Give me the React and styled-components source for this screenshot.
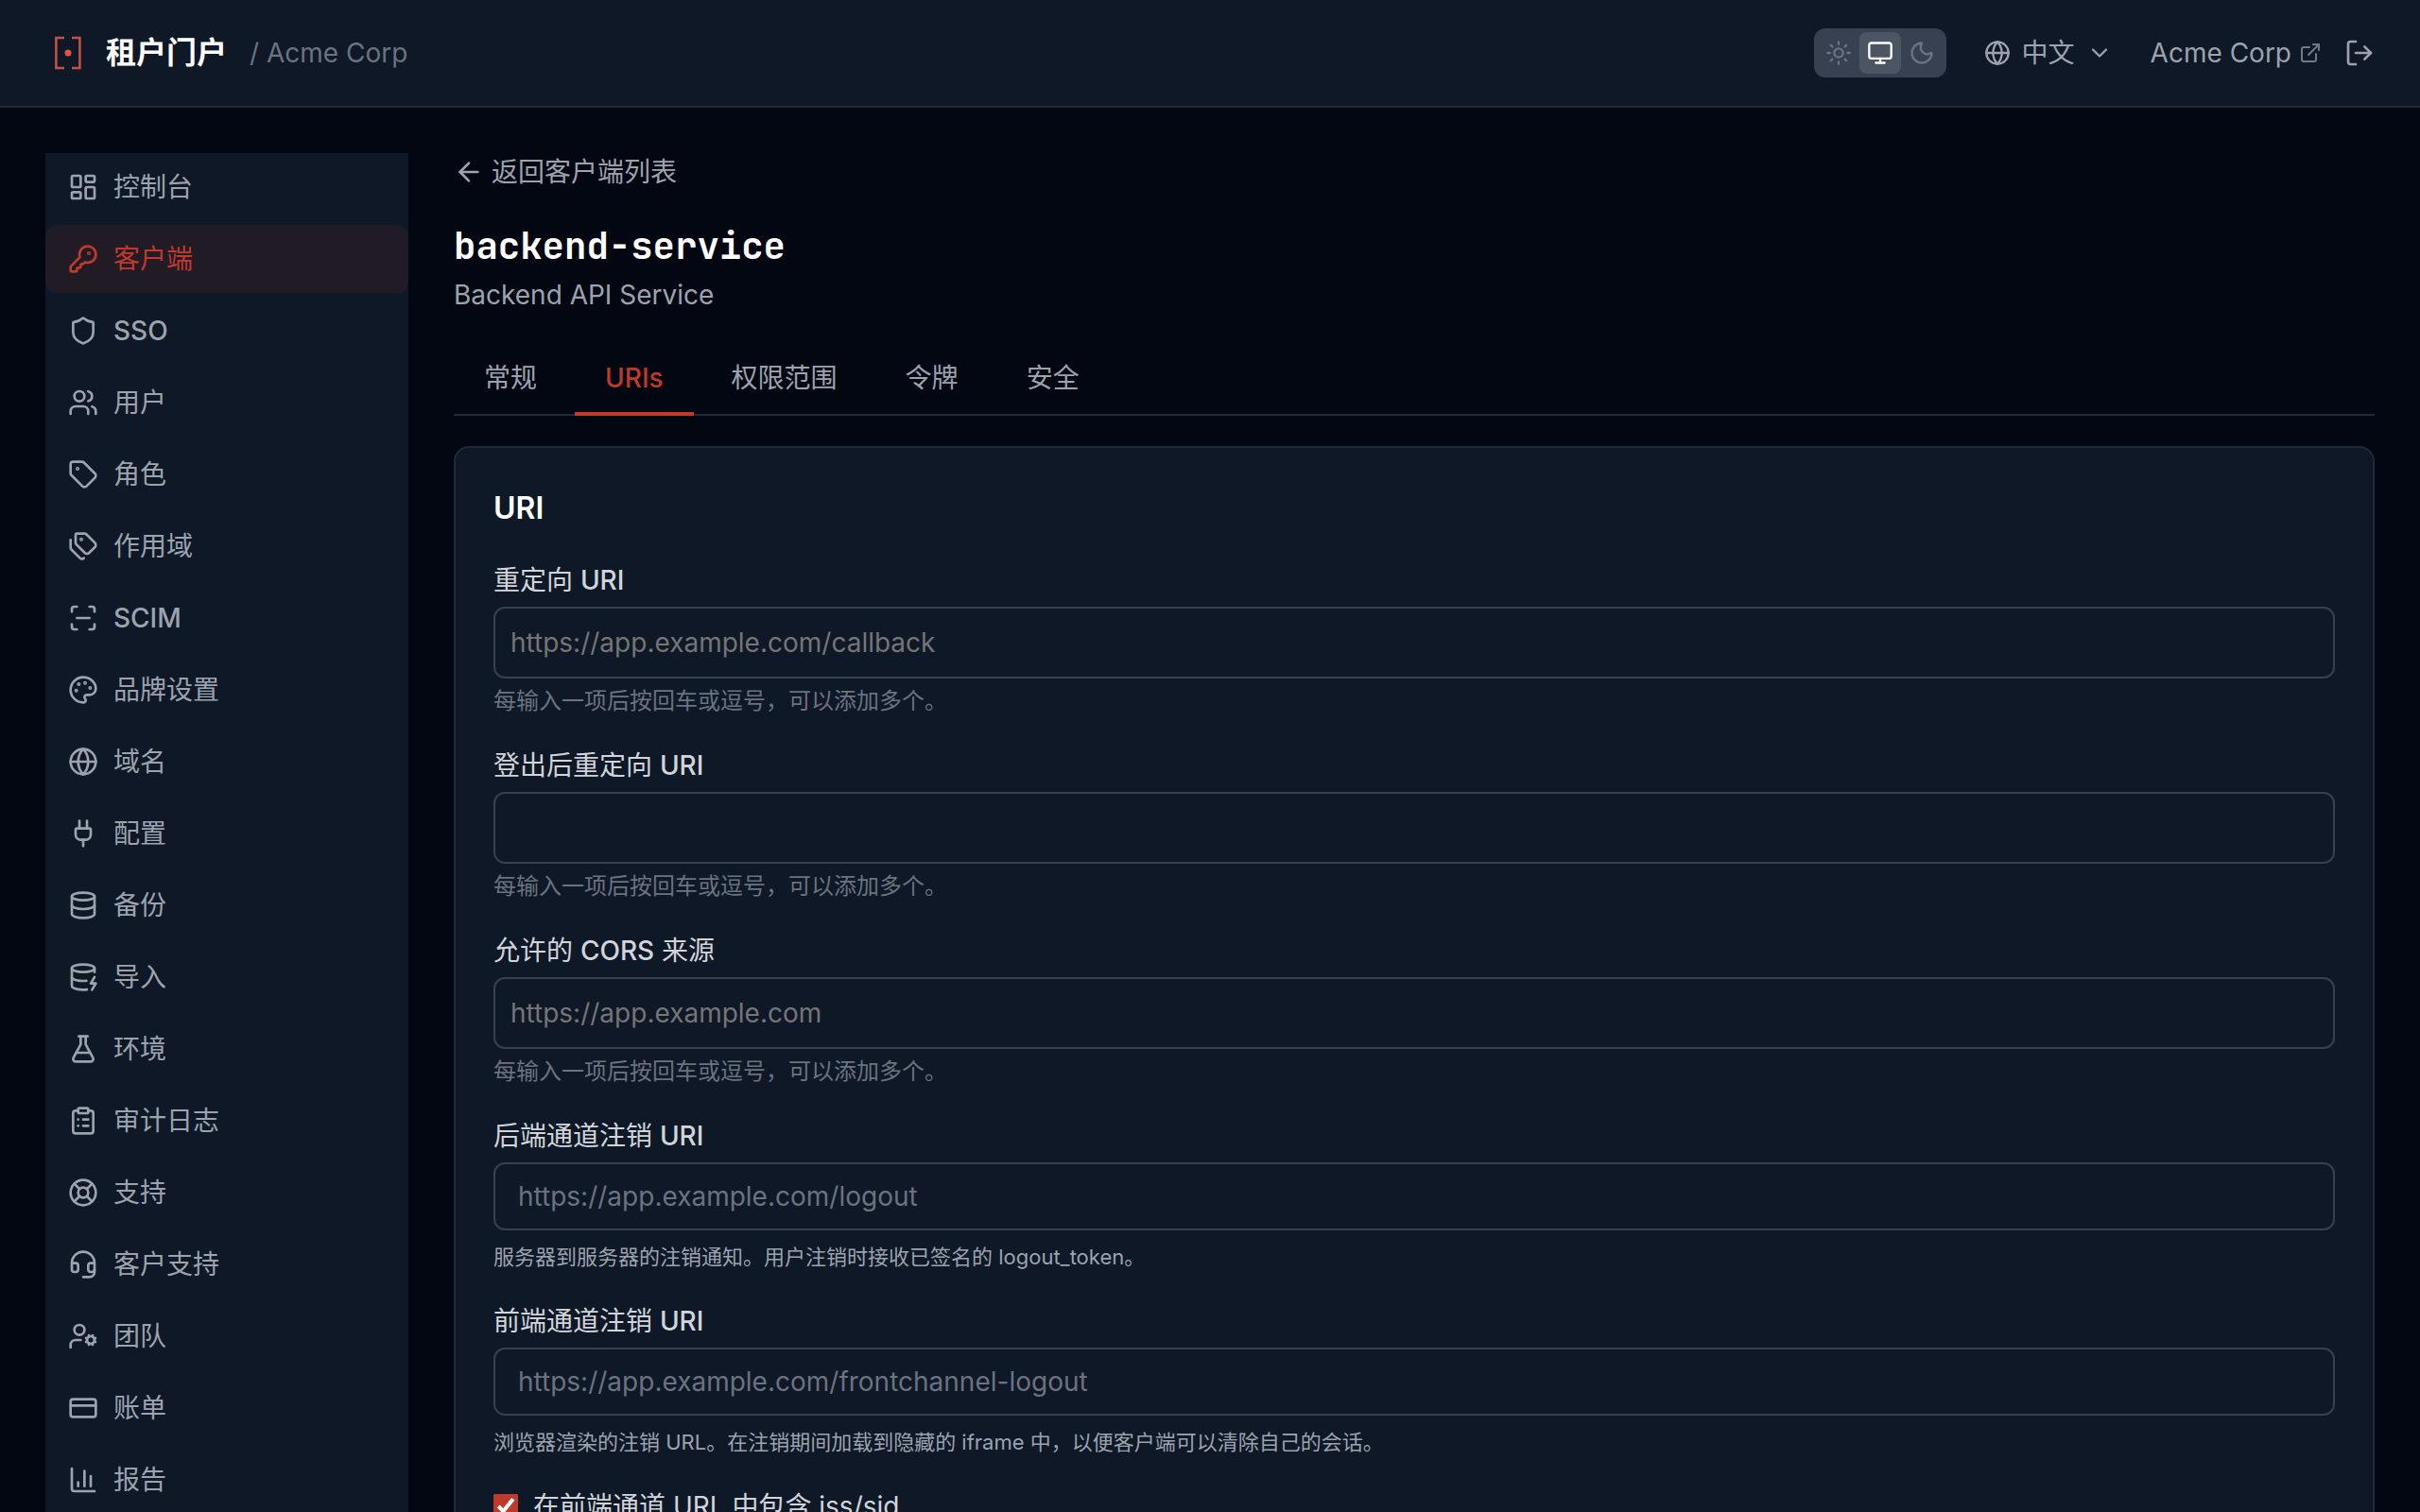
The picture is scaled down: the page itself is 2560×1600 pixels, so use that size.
import React, { useState } from 'react'
import styled, { createGlobalStyle } from 'styled-components'
import {
  LayoutDashboard, KeyRound, Shield, Users, Tag, Tags, ScanLine, Palette, Globe, Plug,
  Database, DatabaseZap, FlaskConical, ClipboardList, LifeBuoy, Headset, UserCog,
  CreditCard, ChartColumn, Sun, Monitor, Moon, ChevronDown, ExternalLink, LogOut, ArrowLeft,
} from 'lucide-react'

const navItems = [
  { label: '控制台', icon: LayoutDashboard },
  { label: '客户端', icon: KeyRound },
  { label: 'SSO', icon: Shield },
  { label: '用户', icon: Users },
  { label: '角色', icon: Tag },
  { label: '作用域', icon: Tags },
  { label: 'SCIM', icon: ScanLine },
  { label: '品牌设置', icon: Palette },
  { label: '域名', icon: Globe },
  { label: '配置', icon: Plug },
  { label: '备份', icon: Database },
  { label: '导入', icon: DatabaseZap },
  { label: '环境', icon: FlaskConical },
  { label: '审计日志', icon: ClipboardList },
  { label: '支持', icon: LifeBuoy },
  { label: '客户支持', icon: Headset },
  { label: '团队', icon: UserCog },
  { label: '账单', icon: CreditCard },
  { label: '报告', icon: ChartColumn },
]

const tabs = ['常规', 'URIs', '权限范围', '令牌', '安全']

const themes = [
  { id: 'light', label: 'Light', icon: Sun },
  { id: 'system', label: 'System', icon: Monitor },
  { id: 'dark', label: 'Dark', icon: Moon },
]

const listHint = '每输入一项后按回车或逗号，可以添加多个。'

const listFields = [
  { id: 'redirect', label: '重定向 URI', placeholder: 'https://app.example.com/callback' },
  { id: 'post-logout', label: '登出后重定向 URI', placeholder: '' },
  { id: 'cors', label: '允许的 CORS 来源', placeholder: 'https://app.example.com' },
]

const urlFields = [
  {
    id: 'backchannel',
    label: '后端通道注销 URI',
    placeholder: 'https://app.example.com/logout',
    hint: '服务器到服务器的注销通知。用户注销时接收已签名的 logout_token。',
  },
  {
    id: 'frontchannel',
    label: '前端通道注销 URI',
    placeholder: 'https://app.example.com/frontchannel-logout',
    hint: '浏览器渲染的注销 URL。在注销期间加载到隐藏的 iframe 中，以便客户端可以清除自己的会话。',
  },
]

const Logo = () => (
  <svg width="48" height="48" viewBox="0 0 48 48" fill="none" aria-hidden="true">
    <path d="M20 8H11.4V40H20M28 8H36.4V40H28" stroke="#c44f45" strokeWidth="2.6" />
    <circle cx="24" cy="24" r="3.5" fill="#e0563c" />
  </svg>
)

// Latin words are set in medium, Chinese stays regular
const MixedText = ({ text }) =>
  text.split(/([A-Za-z]+)/).map((part, i) => (i % 2 ? <Latin key={i}>{part}</Latin> : part))

const App = () => {
  const [theme, setTheme] = useState('system')
  const [tab, setTab] = useState('URIs')
  const [includeSid, setIncludeSid] = useState(true)

  return (
    <>
      <GlobalStyle />
      <Header>
        <Brand href="#">
          <Logo />
          <BrandName>租户门户</BrandName>
          <Tenant>/ Acme Corp</Tenant>
        </Brand>
        <HeaderActions>
          <ThemeSwitch>
            {themes.map(({ id, label, icon: Icon }) => (
              <ThemeButton key={id} aria-label={label} $active={theme === id} onClick={() => setTheme(id)}>
                <Icon size={28} />
              </ThemeButton>
            ))}
          </ThemeSwitch>
          <LanguageButton>
            <Globe size={28} />
            中文
            <ChevronDown size={28} />
          </LanguageButton>
          <Account>
            <AccountLink href="#">
              Acme Corp
              <ExternalLink size={24} />
            </AccountLink>
            <IconButton aria-label="Log out">
              <LogOut size={32} />
            </IconButton>
          </Account>
        </HeaderActions>
      </Header>

      <Layout>
        <Sidebar>
          {navItems.map(({ label, icon: Icon }) => (
            <NavItem key={label} href="#" $active={label === '客户端'}>
              <Icon size={32} />
              <span><MixedText text={label} /></span>
            </NavItem>
          ))}
        </Sidebar>

        <Main>
          <BackLink href="#">
            <ArrowLeft size={32} />
            返回客户端列表
          </BackLink>
          <Title>backend-service</Title>
          <Subtitle>Backend API Service</Subtitle>

          <TabList role="tablist">
            {tabs.map((name) => (
              <Tab key={name} role="tab" aria-selected={tab === name} $active={tab === name} onClick={() => setTab(name)}>
                <MixedText text={name} />
              </Tab>
            ))}
          </TabList>

          <Card>
            <CardTitle>URI</CardTitle>
            {listFields.map((field) => (
              <Field key={field.id}>
                <Label htmlFor={field.id}><MixedText text={field.label} /></Label>
                <ListInput id={field.id} type="text" placeholder={field.placeholder} />
                <ListHint>{listHint}</ListHint>
              </Field>
            ))}
            {urlFields.map((field) => (
              <Field key={field.id}>
                <Label htmlFor={field.id}><MixedText text={field.label} /></Label>
                <UrlInput id={field.id} type="url" placeholder={field.placeholder} />
                <UrlHint>{field.hint}</UrlHint>
              </Field>
            ))}
            <CheckLabel>
              <Checkbox type="checkbox" checked={includeSid} onChange={(e) => setIncludeSid(e.target.checked)} />
              在前端通道 URL 中包含 iss/sid
            </CheckLabel>
          </Card>
        </Main>
      </Layout>
    </>
  )
}

const GlobalStyle = createGlobalStyle`
  *, *::before, *::after {
    box-sizing: border-box;
  }
  html {
    scrollbar-width: none;
  }
  body {
    margin: 0;
    background: #030712;
    color: #9ca3af;
    font-family: Inter, 'Noto Sans CJK SC', sans-serif;
    font-size: 28px;
    line-height: 40px;
  }
  a {
    color: inherit;
    text-decoration: none;
  }
  button, input {
    font: inherit;
    color: inherit;
  }
  button {
    padding: 0;
    border: none;
    background: none;
    cursor: pointer;
  }
  h1, h2, p {
    margin: 0;
  }
  svg {
    flex-shrink: 0;
  }
`

const Latin = styled.span`
  font-weight: 500;
`

const Header = styled.header`
  display: flex;
  align-items: center;
  justify-content: space-between;
  height: 114px;
  padding: 0 48px;
  background: #0f1826;
  border-bottom: 2px solid #1f2937;
`

const Brand = styled.a`
  display: flex;
  align-items: center;
`

const BrandName = styled.span`
  margin: 0 24px 0 16px;
  color: #fff;
  font-size: 32px;
  font-weight: 700;
`

const Tenant = styled.span`
  color: #6b7280;
`

const HeaderActions = styled.div`
  display: flex;
  align-items: center;
  gap: 40px;
`

const ThemeSwitch = styled.div`
  display: flex;
  padding: 4px;
  border-radius: 12px;
  background: #374151;
`

const ThemeButton = styled.button`
  display: flex;
  align-items: center;
  justify-content: center;
  width: 44px;
  height: 44px;
  border-radius: 8px;
  color: ${({ $active }) => ($active ? '#fff' : '#6b7280')};
  background: ${({ $active }) => ($active ? '#4b5563' : 'transparent')};
`

const LanguageButton = styled.button`
  display: flex;
  align-items: center;
  gap: 12px;
`

const Account = styled.div`
  display: flex;
  align-items: center;
  gap: 24px;
`

const AccountLink = styled.a`
  display: flex;
  align-items: center;
  gap: 8px;
  svg {
    opacity: 0.7;
  }
`

const IconButton = styled.button`
  display: flex;
`

const Layout = styled.div`
  display: flex;
  gap: 48px;
  padding: 48px;
`

const Sidebar = styled.nav`
  display: flex;
  flex-direction: column;
  gap: 4px;
  flex: 0 0 384px;
  background: #0f1826;
`

const NavItem = styled.a`
  display: flex;
  align-items: center;
  gap: 16px;
  padding: 16px 24px;
  border-radius: 12px;
  color: ${({ $active }) => ($active ? '#c0392b' : 'inherit')};
  background: ${({ $active }) => ($active ? 'rgba(192, 57, 43, 0.1)' : 'transparent')};
`

const Main = styled.main`
  flex: 1;
  min-width: 0;
`

const BackLink = styled.a`
  display: flex;
  align-items: center;
  gap: 8px;
  width: fit-content;
`

const Title = styled.h1`
  margin-top: 30px;
  color: #fff;
  font-family: 'JetBrains Mono', 'DejaVu Sans Mono', monospace;
  font-size: 39px;
  font-weight: 700;
  line-height: 56px;
`

const Subtitle = styled.p`
  margin-top: 4px;
`

const TabList = styled.div`
  display: flex;
  gap: 8px;
  margin: 32px 0;
  box-shadow: inset 0 -2px #1f2937;
`

const Tab = styled.button`
  padding: 16px 32px;
  border-bottom: 4px solid ${({ $active }) => ($active ? '#c0392b' : 'transparent')};
  color: ${({ $active }) => ($active ? '#c0392b' : 'inherit')};
`

const Card = styled.section`
  padding: 40px;
  border: 2px solid #1f2937;
  border-radius: 16px;
  background: #0f1826;
`

const CardTitle = styled.h2`
  margin-bottom: 32px;
  color: #fff;
  font-size: 32px;
  font-weight: 600;
  line-height: 48px;
`

const Field = styled.div`
  margin-bottom: 32px;
`

const Label = styled.label`
  display: block;
  margin-bottom: 8px;
  color: #d1d5db;
`

const TextInput = styled.input`
  display: block;
  width: 100%;
  border: 2px solid #374151;
  border-radius: 12px;
  background: transparent;
  color: #fff;
`

const ListInput = styled(TextInput)`
  height: 76px;
  padding: 0 16px;
  &::placeholder {
    color: #757575;
  }
`

const UrlInput = styled(TextInput)`
  height: 72px;
  padding: 0 24px;
  &::placeholder {
    color: #6b7280;
  }
`

const ListHint = styled.p`
  margin-top: 8px;
  color: #6b7280;
  font-size: 24px;
  line-height: 32px;
`

const UrlHint = styled.p`
  margin-top: 12px;
  font-size: 22px;
  line-height: 32px;
`

const CheckLabel = styled.label`
  display: flex;
  align-items: center;
  gap: 16px;
  color: #d1d5db;
`

const Checkbox = styled.input`
  width: 26px;
  height: 26px;
  margin: 0;
  accent-color: #c0392b;
`

export default App
